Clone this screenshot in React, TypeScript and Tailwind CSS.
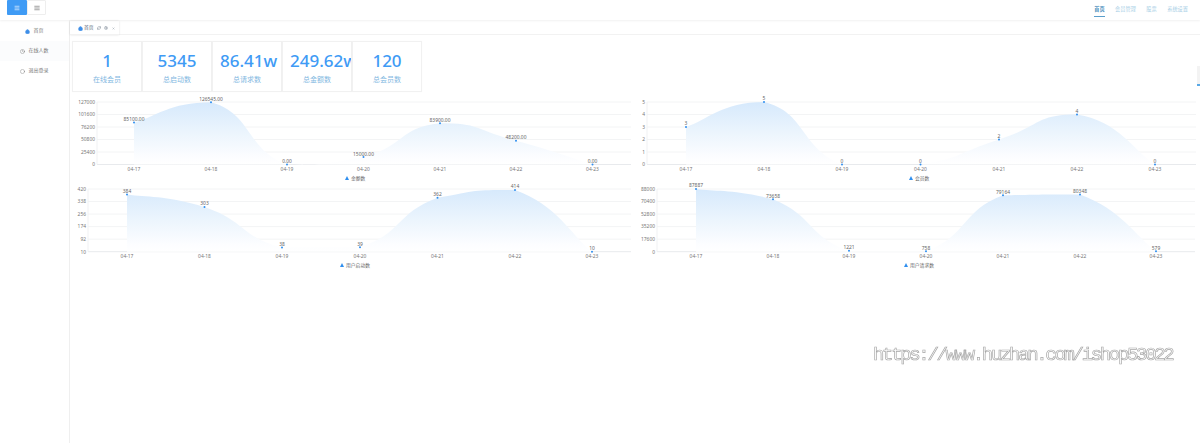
import React from "react";
import { House, RefreshCw, Settings, X, Clock, Circle, Menu, AlignJustify } from "lucide-react";

const font = { fontFamily: '"Noto Sans", "Noto Sans CJK SC", sans-serif' };

type ChartProps = {
  id: string;
  x0: number;
  y0: number;
  left: number;
  right: number;
  top: number;
  bottom: number;
  centers: number[];
  values: number[];
  labels: string[];
  ticks: string[];
  min: number;
  max: number;
  legend: string;
  legendX: number;
  legendY: number;
  height: number;
};

const days = ["04-17", "04-18", "04-19", "04-20", "04-21", "04-22", "04-23"];

function smoothPath(pts: [number, number][]) {
  const s = 0.27;
  let d = `M${pts[0][0]} ${pts[0][1]}`;
  for (let i = 0; i < pts.length - 1; i++) {
    const p0 = pts[Math.max(i - 1, 0)];
    const p1 = pts[i];
    const p2 = pts[i + 1];
    const p3 = pts[Math.min(i + 2, pts.length - 1)];
    const lo = Math.min(p1[1], p2[1]);
    const hi = Math.max(p1[1], p2[1]);
    const c1x = p1[0] + (p2[0] - p0[0]) * s;
    const c1y = Math.min(hi, Math.max(lo, p1[1] + (p2[1] - p0[1]) * s));
    const c2x = p2[0] - (p3[0] - p1[0]) * s;
    const c2y = Math.min(hi, Math.max(lo, p2[1] - (p3[1] - p1[1]) * s));
    d += ` C${c1x} ${c1y} ${c2x} ${c2y} ${p2[0]} ${p2[1]}`;
  }
  return d;
}

function Chart(p: ChartProps) {
  const y = (v: number) => p.bottom - ((v - p.min) / (p.max - p.min)) * (p.bottom - p.top);
  const pts = p.values.map((v, i) => [p.centers[i], y(v)] as [number, number]);
  const area = `${smoothPath(pts)} L${pts[6][0]} ${p.bottom} L${pts[0][0]} ${p.bottom} Z`;
  return (
    <svg
      className="block w-full overflow-visible"
      height={p.height}
      viewBox={`${p.x0} ${p.y0} 565 ${p.height}`}
      style={font}
    >
      <defs>
        <linearGradient id={p.id} gradientUnits="userSpaceOnUse" x1="0" y1={p.top} x2="0" y2={p.bottom}>
          <stop offset="0" stopColor="#d6e9fc" />
          <stop offset="0.5" stopColor="#ecf5fd" />
          <stop offset="0.88" stopColor="#fcfdff" />
          <stop offset="1" stopColor="#ffffff" />
        </linearGradient>
      </defs>
      {p.ticks.map((t, i) => {
        const ty = p.bottom - (i * (p.bottom - p.top)) / (p.ticks.length - 1);
        return (
          <g key={t}>
            <line x1={p.left} x2={p.right} y1={ty} y2={ty} stroke={i === 0 ? "#e8eaed" : "#f3f4f5"} strokeWidth="1" />
            <text x={p.left - 2} y={ty + 1.8} textAnchor="end" fontSize="4.9" fill="#777">
              {t}
            </text>
          </g>
        );
      })}
      <line x1={p.left} x2={p.left} y1={p.top} y2={p.bottom} stroke="#f0f1f3" strokeWidth="1" />
      <path d={area} fill={`url(#${p.id})`} />
      {pts.map((pt, i) => (
        <g key={days[i]}>
          <circle cx={pt[0]} cy={pt[1]} r="1" fill="#2f8fef" />
          <text x={pt[0]} y={pt[1] - 1.6} textAnchor="middle" fontSize="4.9" fill="#666">
            {p.labels[i]}
          </text>
          <text x={pt[0]} y={p.bottom + 6.5} textAnchor="middle" fontSize="4.9" fill="#777">
            {days[i]}
          </text>
        </g>
      ))}
      <polygon
        points={`${p.legendX - 2} ${p.legendY + 2} ${p.legendX} ${p.legendY - 2} ${p.legendX + 2} ${p.legendY + 2}`}
        fill="#2f8fef"
      />
      <text x={p.legendX + 4} y={p.legendY + 1.8} fontSize="4.8" fill="#666">
        {p.legend}
      </text>
    </svg>
  );
}

const stats = [
  ["1", "在线会员"],
  ["5345", "总启动数"],
  ["86.41w", "总请求数"],
  ["249.62w", "总金额数"],
  ["120", "总会员数"],
];

export default function App() {
  return (
    <div className="relative h-[443px] w-[1200px] overflow-hidden bg-white" style={font}>
      <header className="flex h-5 items-center justify-between shadow-[0_1px_2px_rgba(0,0,0,0.06)]">
        <div className="ml-[7px] flex h-[15px] self-start">
          <button className="flex w-[20px] items-center justify-center rounded-[1px] bg-[#3f9bf5] text-white">
            <Menu size={6} strokeWidth={2.5} />
          </button>
          <button className="flex w-[19px] items-center justify-center rounded-[1px] border border-[#eeeeee] bg-white text-[#666]">
            <AlignJustify size={6} strokeWidth={2.5} />
          </button>
        </div>
        <nav className="mr-3 flex items-center gap-[10.5px] text-[5.2px]">
          <div className="relative font-semibold text-[#4a8fbd]">
            <span>首页</span>
            <div className="absolute -bottom-[3px] left-0 h-[1px] w-full bg-[#5b9ecb]" />
          </div>
          <span className="text-[#a9cfe6]">会员管理</span>
          <span className="text-[#a9cfe6]">股票</span>
          <span className="text-[#a9cfe6]">系统设置</span>
        </nav>
      </header>

      <div className="flex h-[423px]">
        <aside className="w-[70px] shrink-0 border-r border-[#efefef] pt-[1px] text-[5px] text-[#777]">
          <div className="flex h-5 items-center justify-center gap-[3px]">
            <House size={5} className="fill-[#3f8fe8] text-[#3f8fe8]" />
            <span>首页</span>
          </div>
          <div className="flex h-5 items-center justify-center gap-[3px] bg-[#fbfcfd]">
            <Clock size={5} />
            <span>在线人数</span>
          </div>
          <div className="flex h-5 items-center justify-center gap-[3px]">
            <Circle size={5} />
            <span>退出登录</span>
          </div>
        </aside>

        <main className="min-w-0 flex-1">
          <div className="h-[15px] border-b border-[#f2f2f2] pt-[1px]">
            <div className="flex h-[14px] w-[49px] items-center pl-[8px] text-[4.8px] text-[#5a6a7a] shadow-[0_0_2px_rgba(0,0,0,0.12)]">
              <House size={5} className="fill-[#3f8fe8] text-[#3f8fe8]" />
              <span className="ml-[1px]">首页</span>
              <RefreshCw size={4} className="ml-[3px]" />
              <Settings size={4} className="ml-[3px]" />
              <X size={3} className="ml-[4px]" />
            </div>
          </div>

          <section className="ml-[2px] mt-[6px] flex h-[51px] w-[350px]">
            {stats.map(([n, l]) => (
              <div
                key={l}
                className="h-full w-[70px] overflow-hidden border border-[#f1f1f1] px-[7px] pt-[7px] text-center shadow-[0_0_1px_rgba(0,0,0,0.03)]"
              >
                <div className="whitespace-nowrap text-[17px] font-medium leading-[24px] text-[#3f9bf5]">{n}</div>
                <div className="mt-[2px] whitespace-nowrap text-[7px] leading-[10px] text-[#82b8df]">{l}</div>
              </div>
            ))}
          </section>

          <div className="mt-[4px] grid w-[1130px] grid-cols-2">
            <Chart
              id="g1" x0={70} y0={96} height={88} left={97} right={631} top={102} bottom={164.5}
              centers={[134, 211, 287, 363.5, 440, 516, 592.5]}
              values={[85100, 126545, 0, 15000, 83900, 48200, 0]}
              labels={["85100.00", "126545.00", "0.00", "15000.00", "83900.00", "48200.00", "0.00"]}
              ticks={["0", "25400", "50800", "76200", "101600", "127000"]}
              min={0} max={127000} legend="金额数" legendX={347} legendY={178}
            />
            <Chart
              id="g2" x0={635} y0={96} height={88} left={647} right={1196} top={102} bottom={164.5}
              centers={[686, 764, 842, 920.5, 999, 1077, 1155]}
              values={[3, 5, 0, 0, 2, 4, 0]}
              labels={["3", "5", "0", "0", "2", "4", "0"]}
              ticks={["0", "1", "2", "3", "4", "5"]}
              min={0} max={5} legend="会员数" legendX={911} legendY={178}
            />
            <Chart
              id="g3" x0={70} y0={184} height={87} left={88} right={631} top={189} bottom={251.7}
              centers={[127, 204.5, 282, 360, 437.5, 515, 592]}
              values={[384, 303, 38, 39, 362, 414, 10]}
              labels={["384", "303", "38", "39", "362", "414", "10"]}
              ticks={["10", "92", "174", "256", "338", "420"]}
              min={10} max={420} legend="用户启动数" legendX={342} legendY={265}
            />
            <Chart
              id="g4" x0={635} y0={184} height={87} left={657} right={1195} top={189} bottom={251.7}
              centers={[696, 773, 849, 926, 1003, 1080, 1156]}
              values={[87887, 73658, 1221, 758, 79164, 80348, 579]}
              labels={["87887", "73658", "1221", "758", "79164", "80348", "579"]}
              ticks={["0", "17600", "35200", "52800", "70400", "88000"]}
              min={0} max={88000} legend="用户请求数" legendX={906} legendY={265}
            />
          </div>
        </main>
      </div>

      <div className="absolute right-0 top-[66px] h-[20px] w-[3px] bg-[#f3f3f3]">
        <div className="absolute bottom-0 left-0 h-[2px] w-full bg-[#5aa9e6]" />
      </div>

      <div
        className="absolute left-[873px] top-[343px] whitespace-nowrap text-[19px] leading-[24px] tracking-[-2.33px] text-transparent [will-change:transform] [-webkit-text-stroke:0.7px_#a8a8a8]"
        style={{ fontFamily: '"Liberation Mono", monospace' }}
      >
        https://www.huzhan.com/ishop53022
      </div>
    </div>
  );
}
